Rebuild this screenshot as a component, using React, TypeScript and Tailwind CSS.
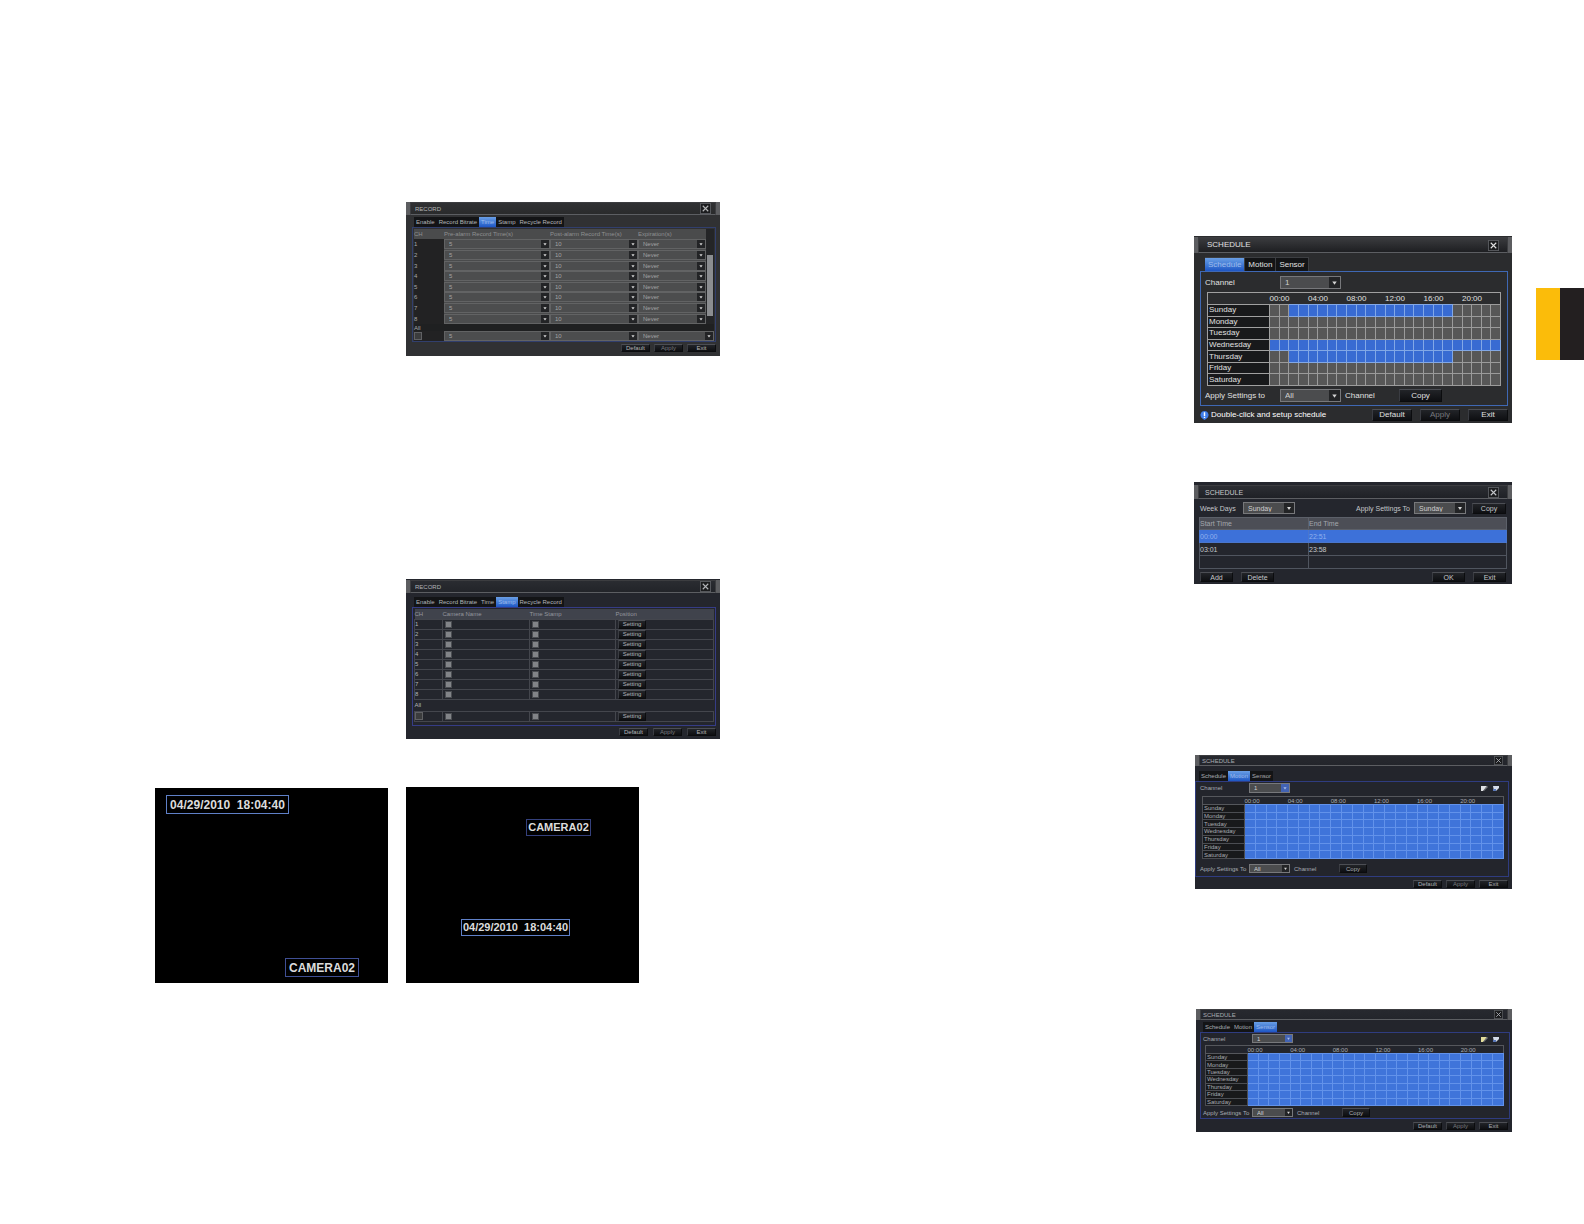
import React from 'react';
import clsx from 'clsx';

const DAYS = ['Sunday', 'Monday', 'Tuesday', 'Wednesday', 'Thursday', 'Friday', 'Saturday'];
const HOURS = ['00:00', '04:00', '08:00', '12:00', '16:00', '20:00'];
const CHANNELS = ['1', '2', '3', '4', '5', '6', '7', '8'];

// Recorded hours per day, as [first, last)
const weekly: Record<string, [number, number]> = {
  Sunday: [2, 19],
  Wednesday: [0, 24],
  Thursday: [2, 19],
};

const allWeek: Record<string, [number, number]> = Object.fromEntries(
  DAYS.map((day) => [day, [0, 24] as [number, number]])
);

interface DialogProps {
  title: string;
  className: string;
  barClass: string;
  titleClass: string;
  children: React.ReactNode;
}

// Window frame with the title bar and close button
const Dialog: React.FC<DialogProps> = ({ title, className, barClass, titleClass, children }) => (
  <section className={clsx('flex flex-col overflow-hidden leading-none', className)}>
    <header className={clsx('flex shrink-0 border-x-4 border-[#5c5d60]', barClass)}>
      <div
        className={clsx(
          'flex grow items-center justify-between border border-t-[#3c3d40] border-r-[#3c3d40] border-b-[#5c5e62] border-l-[#3c3d40] bg-linear-to-b',
          titleClass
        )}
      >
        <h2>{title}</h2>
        <button aria-label="Close" className="flex h-full items-center">
          <svg viewBox="0 0 12 12" className="h-full max-h-[11px] w-auto" fill="none">
            <rect x="0.5" y="0.5" width="11" height="11" fill="#1b1c1e" stroke="#5a5c60" />
            <path d="M3 3l6 6M9 3l-6 6" stroke="currentColor" strokeWidth="1.2" />
          </svg>
        </button>
      </div>
    </header>
    {children}
  </section>
);

interface PickProps {
  label: string;
  options: string[];
  className: string;
  selectClass?: string;
  blueArrow?: boolean;
}

const Pick: React.FC<PickProps> = ({
  label,
  options,
  className,
  selectClass = 'border-[#77787b] bg-[#4b4c4e] text-[#d0d0d0]',
  blueArrow,
}) => (
  <div className={clsx('relative shrink-0', className)}>
    <select
      aria-label={label}
      className={clsx('block h-full w-full appearance-none border px-1 py-0 leading-none', selectClass)}
    >
      {options.map((option) => (
        <option key={option}>{option}</option>
      ))}
    </select>
    <svg
      viewBox="0 0 10 10"
      className="pointer-events-none absolute top-px right-px bottom-px h-[calc(100%-2px)] w-auto"
    >
      <rect width="10" height="10" fill={blueArrow ? '#4263b4' : '#232426'} />
      <path d="M3 4h4L5 7z" fill={blueArrow ? '#a9bde8' : '#d4d4d4'} />
    </svg>
  </div>
);

const Btn: React.FC<{ children: string; className: string; dim?: boolean }> = ({ children, className, dim }) => (
  <button
    className={clsx(
      'flex shrink-0 items-center justify-center border border-t-[#4c4e54] border-r-[#0b0c0e] border-b-[#0b0c0e] border-l-[#3a3c42] bg-linear-to-b from-[#222428] to-[#0e0f12]',
      className,
      dim && 'text-[#77797e]'
    )}
  >
    {children}
  </button>
);

interface TabsProps {
  tabs: string[];
  active: string;
  className: string;
  tabClass: string;
}

const Tabs: React.FC<TabsProps> = ({ tabs, active, className, tabClass }) => (
  <nav className={clsx('flex shrink-0 items-stretch', className)}>
    {tabs.map((tab) => (
      <button
        key={tab}
        className={clsx(
          'whitespace-nowrap',
          tabClass,
          tab === active ? 'bg-linear-to-b from-[#6a9fe6] to-[#1e56c4] text-[#9dbbec]' : 'bg-[#131416]'
        )}
      >
        {tab}
      </button>
    ))}
  </nav>
);

interface WeekGridProps {
  ranges: Record<string, [number, number]>;
  className: string;
  labelClass: string;
  headClass: string;
  soft?: boolean;
}

// One row per day, one cell per hour
const WeekGrid: React.FC<WeekGridProps> = ({ ranges, className, labelClass, headClass, soft }) => (
  <table className={clsx('table-fixed border-collapse border', soft ? 'border-[#55575c]' : 'border-[#a0a0a0]', className)}>
    <thead>
      <tr className={headClass}>
        <th className={clsx('border-b p-0', soft ? 'border-[#55575c]' : 'border-[#a0a0a0]', labelClass)} />
        {HOURS.map((hour) => (
          <th key={hour} colSpan={4} className="p-0 text-left font-normal">
            {hour}
          </th>
        ))}
      </tr>
    </thead>
    <tbody>
      {DAYS.map((day) => {
        const [from, to] = ranges[day] ?? [0, 0];
        return (
          <tr key={day}>
            <th
              scope="row"
              className={clsx(
                'border bg-[#18191b] p-0 pl-px text-left font-normal',
                soft ? 'border-[#4b4d52]' : 'border-[#a0a0a0]'
              )}
            >
              {day}
            </th>
            {Array.from({ length: 24 }, (_, hour) => (
              <td
                key={hour}
                className={clsx(
                  'border p-0',
                  hour >= from && hour < to
                    ? soft
                      ? 'border-[#6292ea] bg-[#3f74da]'
                      : 'border-[#82a8e6] bg-[#386bd2]'
                    : 'border-[#9b9b9b] bg-[#575757]'
                )}
              />
            ))}
          </tr>
        );
      })}
    </tbody>
  </table>
);

const GridIcons: React.FC<{ pencil: string }> = ({ pencil }) => (
  <div className="mr-1 ml-auto flex gap-1">
    <button aria-label="Draw" className="h-2 w-2">
      <svg viewBox="0 0 8 8" className="h-2 w-2">
        <path d="M1 2h6L3 7H1z" fill={pencil} />
        <path d="M7 2l1 1-4 4H3z" fill="#7b7d80" />
      </svg>
    </button>
    <button aria-label="Erase" className="h-2 w-2">
      <svg viewBox="0 0 8 8" className="h-2 w-2">
        <path d="M1 2h6v2L4 7H2z" fill="#d5dcea" />
        <path d="M1 5h3v2H1z" fill="#5a78b8" />
      </svg>
    </button>
  </div>
);

const DialogButtons: React.FC<{ className: string; btnClass: string }> = ({ className, btnClass }) => (
  <div className={clsx('flex', className)}>
    <Btn className={btnClass}>Default</Btn>
    <Btn className={btnClass} dim>
      Apply
    </Btn>
    <Btn className={btnClass}>Exit</Btn>
  </div>
);

const TimeRow: React.FC<{ channel: string; last?: boolean }> = ({ channel, last }) => (
  <tr>
    <td className="w-[30px] bg-[#222223] p-0">
      {last ? <div className="h-2 w-2 border border-[#606164] bg-[#3b3c3d]" /> : channel}
    </td>
    {[
      ['Pre-alarm', '5', 'w-[106px]'],
      ['Post-alarm', '10', 'w-[88px]'],
      ['Expiration', 'Never', 'w-auto'],
    ].map(([name, value, width]) => (
      <td key={name} className={clsx('p-0', width)}>
        <Pick
          label={`${name} ${channel}`}
          options={[value]}
          className="h-[10px] w-full"
          selectClass="border-[#626364] bg-[#4c4d4e] text-[#a2a3a4]"
        />
      </td>
    ))}
  </tr>
);

const RecordTime = () => (
  <Dialog
    title="RECORD"
    className="h-[154px] w-[314px] bg-[#303133] text-[6px] text-[#b4b5b6]"
    barClass="h-[13px]"
    titleClass="from-[#303133] to-[#2a2b2c] pr-1 pl-1"
  >
    <Tabs
      tabs={['Enable', 'Record Bitrate', 'Time', 'Stamp', 'Recycle Record']}
      active="Time"
      className="mt-0.5 ml-2 h-[10px]"
      tabClass="px-0.5"
    />
    <div className="mr-1 ml-1.5 h-[115px] border border-[#313f6d] p-px text-[#a8a9aa]">
      <div className="flex">
        <table className="h-[95px] grow table-fixed border-collapse bg-[#4a4b4c]">
          <thead>
            <tr className="h-[10px] text-left text-[#8f9091]">
              <th className="w-[30px] p-0 font-normal">CH</th>
              <th className="w-[106px] p-0 font-normal">Pre-alarm Record Time(s)</th>
              <th className="w-[88px] p-0 font-normal">Post-alarm Record Time(s)</th>
              <th className="p-0 font-normal">Expiration(s)</th>
            </tr>
          </thead>
          <tbody>
            {CHANNELS.map((channel) => (
              <TimeRow key={channel} channel={channel} />
            ))}
          </tbody>
        </table>
        <div className="flex w-2 flex-col items-center bg-[#242527] pt-[26px] pb-2">
          <div className="w-1.5 grow bg-[#8b8d90]" />
        </div>
      </div>
      <p className="flex h-[7px] items-center bg-[#1f2021]">All</p>
      <table className="w-full table-fixed border-collapse bg-[#4a4b4c]">
        <tbody>
          <TimeRow channel="All" last />
        </tbody>
      </table>
    </div>
    <DialogButtons className="justify-end gap-1 pt-0.5 pr-1" btnClass="h-2 w-[29px]" />
  </Dialog>
);

const StampRow: React.FC<{ channel: string; last?: boolean }> = ({ channel, last }) => (
  <tr className="h-[10px]">
    <td className="border border-[#44464d] p-0">
      {last ? <div className="h-2 w-2 border border-[#606164] bg-[#3b3c3d]" /> : channel}
    </td>
    {['Camera Name', 'Time Stamp'].map((name) => (
      <td key={name} className="border border-[#44464d] p-0 pl-0.5">
        <input
          type="checkbox"
          defaultChecked
          aria-label={`${name} ${channel}`}
          className="block h-[7px] w-[7px] appearance-none border border-[#4b4d52] bg-[#828488]"
        />
      </td>
    ))}
    <td className="border border-[#44464d] p-0 pl-0.5">
      <Btn className="h-[9px] w-[28px]">Setting</Btn>
    </td>
  </tr>
);

const RecordStamp = () => (
  <Dialog
    title="RECORD"
    className="h-[160px] w-[314px] bg-[#24262d] pt-px text-[6px] text-[#b2b4b8]"
    barClass="h-[13px]"
    titleClass="from-[#2a2c31] to-[#222429] pr-1 pl-1"
  >
    <Tabs
      tabs={['Enable', 'Record Bitrate', 'Time', 'Stamp', 'Recycle Record']}
      active="Stamp"
      className="mt-1 ml-2 h-[10px]"
      tabClass="px-0.5"
    />
    <div className="mr-1 ml-1.5 h-[119px] border border-[#353c86] p-px">
      <table className="w-full table-fixed border-collapse">
        <thead>
          <tr className="h-[10px] bg-[#40434c] text-left text-[#94979e]">
            <th className="w-[28px] p-0 font-normal">CH</th>
            <th className="w-[87px] p-0 font-normal">Camera Name</th>
            <th className="w-[86px] p-0 font-normal">Time Stamp</th>
            <th className="p-0 font-normal">Position</th>
          </tr>
        </thead>
        <tbody>
          {CHANNELS.map((channel) => (
            <StampRow key={channel} channel={channel} />
          ))}
          <tr className="h-[12px]">
            <td colSpan={4} className="p-0">
              All
            </td>
          </tr>
          <StampRow channel="All" last />
        </tbody>
      </table>
    </div>
    <DialogButtons className="justify-end gap-[5px] pt-0.5 pr-1" btnClass="h-2 w-[29px]" />
  </Dialog>
);

const Schedule = () => (
  <Dialog
    title="SCHEDULE"
    className="h-[187px] w-[318px] bg-[#2b2c2e] pt-px text-[8px] text-[#e0e0e0]"
    barClass="h-4"
    titleClass="from-[#3a3b3e] to-[#1e1f22] pr-2 pl-2"
  >
    <Tabs
      tabs={['Schedule', 'Motion', 'Sensor']}
      active="Schedule"
      className="mt-1 ml-[11px] h-[14px]"
      tabClass="border-t border-r border-[#3c3e42] px-[3px]"
    />
    <div className="mr-1 ml-1.5 h-[135px] border border-[#3f68b4] px-1 pt-1">
      <label className="flex h-[13px] items-center">
        <span className="w-[75px]">Channel</span>
        <Pick label="Channel" options={['1']} className="h-[13px] w-[61px]" />
      </label>
      <div className="px-0.5 pt-[3px]">
        <WeekGrid ranges={weekly} className="h-[94px] w-full" labelClass="w-[62px]" headClass="h-[12px]" />
      </div>
      <div className="flex items-center pt-[3px]">
        <span className="w-[75px]">Apply Settings to</span>
        <Pick label="Apply settings to" options={['All']} className="h-[13px] w-[61px]" />
        <span className="w-[58px] pl-1">Channel</span>
        <Btn className="h-[13px] w-[43px]">Copy</Btn>
      </div>
    </div>
    <footer className="flex items-center pt-[3px] pr-1 pl-1.5">
      <svg viewBox="0 0 10 10" className="mr-0.5 h-[9px] w-[9px]">
        <path d="M5 0a4.5 4.5 0 0 1 2 8.500L5 10 3 8.500A4.500 4.500 0 0 1 5 0z" fill="#3f7de8" />
        <path d="M4.200 1.500h1.600v4H4.200zM4.200 6.300h1.600v1.500H4.200z" fill="#fff" />
      </svg>
      <span className="text-white">Double-click and setup schedule</span>
      <DialogButtons className="ml-auto gap-2" btnClass="h-3 w-10" />
    </footer>
  </Dialog>
);

const WeekDays = () => (
  <Dialog
    title="SCHEDULE"
    className="h-[102px] w-[318px] bg-[#24262d] pt-[3px] text-[7px] text-[#c4c6ca]"
    barClass="h-[14px]"
    titleClass="from-[#2c2e33] to-[#1f2126] pr-2 pl-1.5"
  >
    <div className="flex h-[18px] shrink-0 items-center px-1.5">
      <span className="w-[43px]">Week Days</span>
      <Pick label="Week days" options={['Sunday']} className="h-[12px] w-[52px]" />
      <span className="mr-1 ml-auto">Apply Settings To</span>
      <Pick label="Apply settings to" options={['Sunday']} className="mr-1.5 h-[12px] w-[52px]" />
      <Btn className="h-[11px] w-[34px]">Copy</Btn>
    </div>
    <table className="mx-[5px] shrink-0 table-fixed border-collapse border border-[#555a66]">
      <thead>
        <tr className="h-[12px] bg-[#4c4e56] text-left text-[#a3a6ad]">
          <th className="w-[109px] border border-[#5c6069] p-0 font-normal">Start Time</th>
          <th className="border border-[#5c6069] p-0 font-normal">End Time</th>
        </tr>
      </thead>
      <tbody>
        <tr className="h-[13px] bg-[#3d71d9] text-[#8fb0ee]">
          <td className="border border-[#4a76cc] p-0">00:00</td>
          <td className="border border-[#4a76cc] p-0">22:51</td>
        </tr>
        <tr className="h-[13px]">
          <td className="border border-[#50555f] p-0">03:01</td>
          <td className="border border-[#50555f] p-0">23:58</td>
        </tr>
        <tr className="h-[13px]">
          <td className="border border-[#50555f] p-0" />
          <td className="border border-[#50555f] p-0" />
        </tr>
      </tbody>
    </table>
    <footer className="flex gap-2 px-1.5 pt-[3px]">
      <Btn className="h-[10px] w-[33px]">Add</Btn>
      <Btn className="h-[10px] w-[33px]">Delete</Btn>
      <Btn className="ml-auto h-[10px] w-[33px]">OK</Btn>
      <Btn className="h-[10px] w-[33px]">Exit</Btn>
    </footer>
  </Dialog>
);

const Motion = () => (
  <Dialog
    title="SCHEDULE"
    className="h-[134px] w-[317px] bg-[#23252c] text-[6px] text-[#a9acb2]"
    barClass="h-[11px]"
    titleClass="from-[#27292f] to-[#23252b] pr-1 pl-0.5"
  >
    <Tabs
      tabs={['Schedule', 'Motion', 'Sensor']}
      active="Motion"
      className="mt-[5px] ml-1 h-[10px]"
      tabClass="px-0.5"
    />
    <div className="mr-[3px] h-[96px] border border-[#2f3c80] px-1 pt-px">
      <div className="flex h-[10px] items-center">
        <span className="w-[49px]">Channel</span>
        <Pick label="Motion channel" options={['1']} className="h-[10px] w-[41px]" blueArrow />
        <GridIcons pencil="#e0e2e4" />
      </div>
      <div className="pt-[3px] pl-0.5">
        <WeekGrid ranges={allWeek} className="h-[63px] w-full" labelClass="w-[42px]" headClass="h-2" soft />
      </div>
      <div className="flex items-center pt-[5px]">
        <span className="w-[49px]">Apply Settings To</span>
        <Pick label="Apply motion settings to" options={['All']} className="h-[9px] w-[41px]" />
        <span className="w-[49px] pl-1">Channel</span>
        <Btn className="h-[9px] w-[28px]">Copy</Btn>
      </div>
    </div>
    <DialogButtons className="justify-end gap-1 pt-[3px] pr-1" btnClass="h-2 w-[29px]" />
  </Dialog>
);

const Sensor = () => (
  <Dialog
    title="SCHEDULE"
    className="h-[123px] w-[316px] bg-[#23252c] text-[6px] text-[#a9acb2]"
    barClass="h-[11px]"
    titleClass="from-[#27292f] to-[#23252b] pr-1 pl-0.5"
  >
    <Tabs
      tabs={['Schedule', 'Motion', 'Sensor']}
      active="Sensor"
      className="mt-0.5 ml-[7px] h-[10px]"
      tabClass="px-0.5"
    />
    <div className="mr-0.5 ml-1 h-[87px] border border-[#2f3c80] pt-px pr-[5px] pl-0.5">
      <div className="flex h-[9px] items-center">
        <span className="w-[49px]">Channel</span>
        <Pick label="Sensor channel" options={['1']} className="h-[9px] w-[41px]" blueArrow />
        <GridIcons pencil="#e3dd9c" />
      </div>
      <div className="pt-0.5 pl-0.5">
        <WeekGrid ranges={allWeek} className="h-[61px] w-full" labelClass="w-[42px]" headClass="h-2" soft />
      </div>
      <div className="flex items-center pt-0.5">
        <span className="w-[49px]">Apply Settings To</span>
        <Pick label="Apply sensor settings to" options={['All']} className="h-[9px] w-[41px]" />
        <span className="w-[49px] pl-1">Channel</span>
        <Btn className="h-[9px] w-[28px]">Copy</Btn>
      </div>
    </div>
    <DialogButtons className="justify-end gap-1 pt-[3px] pr-1" btnClass="h-2 w-[29px]" />
  </Dialog>
);

const Overlay: React.FC<{ text: string; className: string }> = ({ text, className }) => (
  <span
    className={clsx(
      'absolute flex items-center justify-center border leading-none font-bold whitespace-pre text-[#dcdcdc]',
      className
    )}
  >
    {text}
  </span>
);

export default function App() {
  return (
    <main className="grid min-h-screen grid-cols-2 bg-white font-['Liberation_Sans',Arial,sans-serif]">
      <div className="flex justify-end pt-[202px] pr-[72px]">
        <div className="flex w-full max-w-[565px] flex-col">
          <div className="mb-[223px] self-end">
            <RecordTime />
          </div>
          <div className="mb-12 self-end">
            <RecordStamp />
          </div>
          <div className="flex items-end gap-[18px]">
            <div className="relative h-[195px] w-[233px] bg-black">
              <Overlay
                text="04/29/2010  18:04:40"
                className="top-[7px] left-[11px] h-[19px] w-[123px] border-[#5f80c8] text-[12px]"
              />
              <Overlay
                text="CAMERA02"
                className="right-[29px] bottom-[6px] h-[19px] w-[74px] border-[#3f4f94] text-[12px]"
              />
            </div>
            <div className="relative h-[196px] w-[233px] bg-black">
              <Overlay text="CAMERA02" className="top-8 right-12 h-[17px] w-[65px] border-[#34407c] text-[11px]" />
              <Overlay
                text="04/29/2010  18:04:40"
                className="bottom-[47px] left-[55px] h-[17px] w-[109px] border-[#5f80c8] text-[11px]"
              />
            </div>
          </div>
        </div>
      </div>

      <div className="flex justify-end gap-6">
        <div className="flex flex-col items-end pt-[236px]">
          <div className="mb-[59px]">
            <Schedule />
          </div>
          <div className="mb-[171px]">
            <WeekDays />
          </div>
          <div className="mb-[120px]">
            <Motion />
          </div>
          <Sensor />
        </div>
        <aside className="mt-[288px] flex h-[72px] w-12">
          <div className="w-1/2 bg-[#fbbc0a]" />
          <div className="w-1/2 bg-[#231f20]" />
        </aside>
      </div>
    </main>
  );
}
